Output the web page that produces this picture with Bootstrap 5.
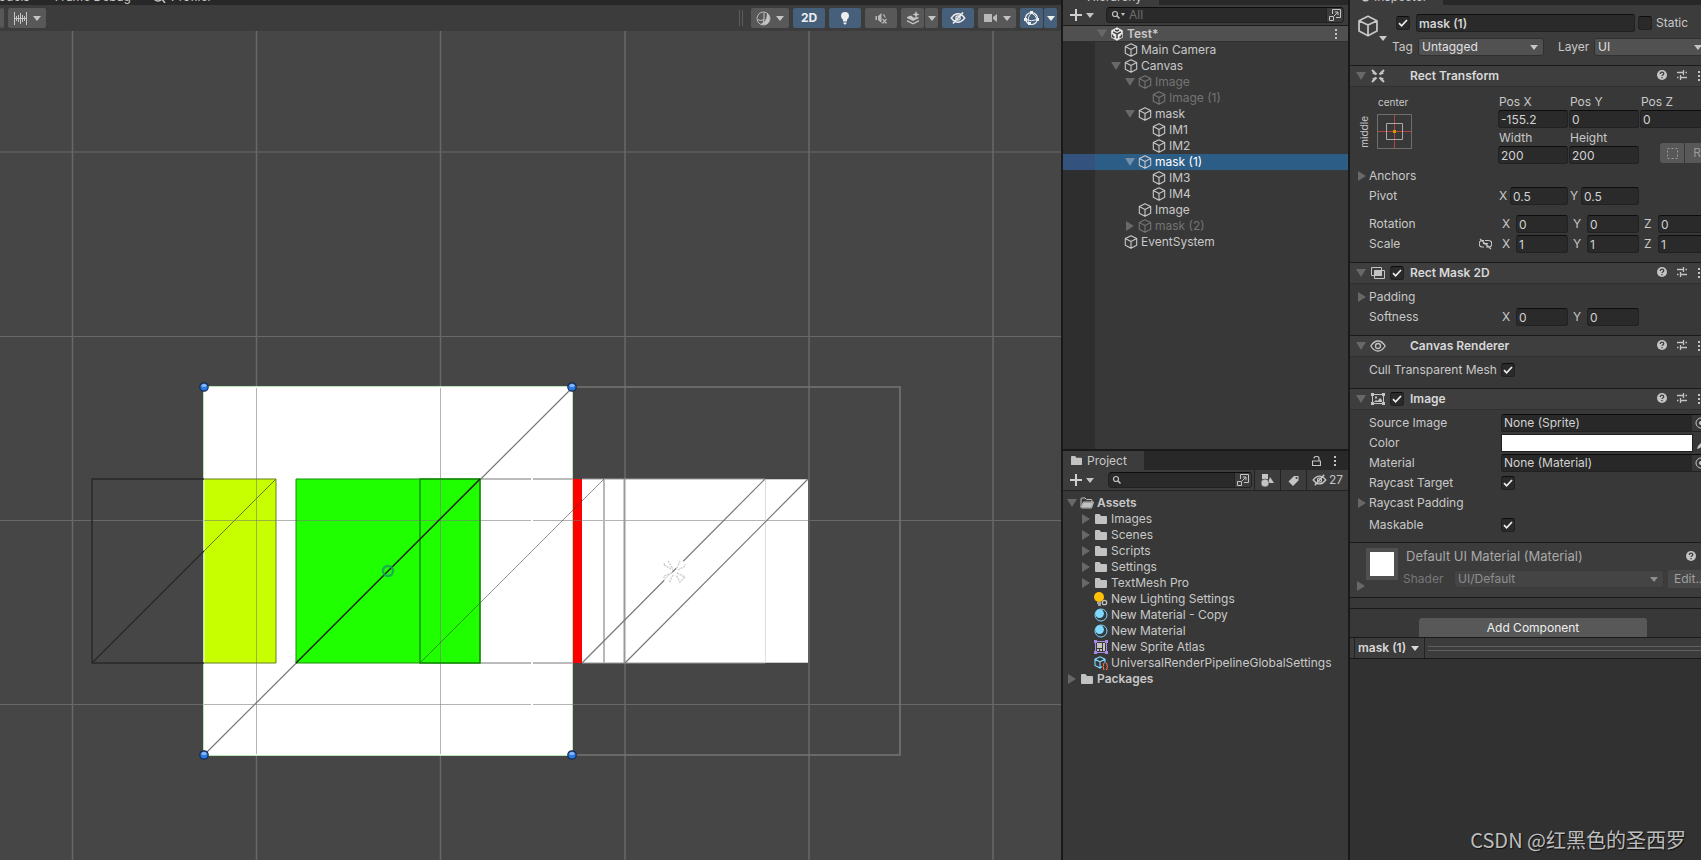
<!DOCTYPE html>
<html lang="en">
<head>
<meta charset="utf-8">
<meta name="viewport" content="width=device-width, initial-scale=1">
<title>Scene editor</title>
<link href="https://cdn.jsdelivr.net/npm/bootstrap@5.3.0/dist/css/bootstrap.min.css" rel="stylesheet">
<style>
body{background:#191919;color:#c8c8c8;font-family:Inter,"Noto Sans CJK SC",sans-serif;font-size:12px;line-height:16px}
svg{display:block;flex:none}
button{font:inherit;color:inherit}
.editor{display:grid;grid-template-columns:minmax(0,1fr) 285px 351px;column-gap:2px;height:100vh;overflow:hidden}
.pane{min-width:0;min-height:0;background:#383838;overflow:hidden}
.topstrip{height:5px;background:#282828;align-items:flex-end;overflow:hidden;flex:none}
.topstrip span{white-space:nowrap;display:flex;align-items:center;gap:4px;height:16px}
.topstrip .live{background:#3c3c3c}
.bar{background:#3c3c3c;flex:none}
.tb{background:#585858;border:0;border-radius:2px;height:20px;padding:0;display:flex;align-items:center;justify-content:center;color:#c4c4c4;flex:none}
.tb.on{background:#46607c;color:#eee}
.w38{width:38px}.w32{width:32px}.w23{width:23px}.w13{width:13px}
.caret{width:0;height:0;border:4px solid transparent;border-top:5px solid currentColor;border-bottom:0;flex:none}
.fold{width:10px;height:10px;flex:none;background:#686868;clip-path:polygon(0 10%,100% 10%,50% 90%)}
.fold.shut{clip-path:polygon(10% 0,90% 50%,10% 100%)}
.fold.none{visibility:hidden}
.scene{background:#464646;flex:1 1 0;min-height:0}
.ibtn{background:none;border:0;padding:0;display:flex;align-items:center;color:#c4c4c4}
.create{gap:4px;margin-right:12px}
.find{background:#2a2a2a;border:1px solid #212121;border-top-color:#0d0d0d;border-radius:4px;height:16px;align-items:center}
.find input{background:none;border:0;outline:0;color:#c8c8c8;padding:0;min-width:0;font-size:12px;line-height:14px}
.find input::placeholder{color:#6e6e6e;opacity:1}
.find .ibtn{border-left:1px solid #212121;background:#3c3c3c;height:14px;width:17px;justify-content:center;border-radius:0 3px 3px 0}
.tree{list-style:none;margin:0;padding:0}
.tree li{display:flex;align-items:center;height:16px;white-space:nowrap;padding-right:10px;gap:3px}
.hier{background:linear-gradient(90deg,#2e2e2e 32px,#383838 32px);flex:1 1 0;min-height:0}
.hier li{padding-left:calc(20px + var(--d)*14px)}
.hier li.sel{background:linear-gradient(90deg,#34527e 32px,#2c5d87 32px);color:#fff}
.hier li.sel svg{color:#c8c8c8}
.hier li.sel .fold{background:#7090ac}
.hier li.off{color:#747474}
.hier li.top1{background:#505050;border-bottom:1px solid #303030;font-weight:600}
.proj li{padding-left:calc(4px + var(--d)*14px)}
.chk{appearance:none;width:14px;height:14px;margin:0;background:#2a2a2a;border:1px solid #212121;border-top-color:#0d0d0d;border-radius:3px;flex:none}
.chk:checked{background:#2a2a2a url("data:image/svg+xml,%3Csvg xmlns='http://www.w3.org/2000/svg' viewBox='0 0 12 12'%3E%3Cpath d='M2 6.2l2.6 2.6L10 3' fill='none' stroke='%23eee' stroke-width='1.7'/%3E%3C/svg%3E") center/12px}
.fld{background:#2a2a2a;border:1px solid #212121;border-top-color:#0d0d0d;border-radius:3px;color:#d2d2d2;height:18px;padding:0 2px;font-size:12px;min-width:0;outline:0;flex:none}
.w70{width:70px}.w58{width:58px}.w52{width:52px}
.sel-box{appearance:none;background:#515151 url("data:image/svg+xml,%3Csvg xmlns='http://www.w3.org/2000/svg' viewBox='0 0 8 5'%3E%3Cpath d='M0 0h8L4 5z' fill='%23c4c4c4'/%3E%3C/svg%3E") no-repeat right 5px center/8px 5px;border:1px solid #303030;border-radius:3px;color:#e0e0e0;height:18px;padding:0 3px;font-size:12px;line-height:14px;flex:none}
.sel-box:disabled{background:#444 url("data:image/svg+xml,%3Csvg xmlns='http://www.w3.org/2000/svg' viewBox='0 0 8 5'%3E%3Cpath d='M0 0h8L4 5z' fill='%238e8e8e'/%3E%3C/svg%3E") no-repeat right 5px center/8px 5px;border-color:#3a3a3a;color:#8e8e8e;opacity:1}
.chead{height:22px;background:#3e3e3e;border-top:1px solid #1a1a1a;border-bottom:1px solid #303030;display:flex;align-items:center;padding:0 0 0 6px;flex:none}
.chead h2{font-size:12px;line-height:16px;font-weight:600;margin:0;color:#d8d8d8}
.chead .tail{margin-left:auto;display:flex;gap:10px;flex:none}
.cicon{margin:0 5px 0 5px}
.csec{padding:0 0 0 19px;flex:none}
.prow{display:flex;align-items:center;height:20px;white-space:nowrap}
.prow .lbl{width:132px;flex:none}
.prow>.fold{margin-left:-12px;margin-right:2px}
.ax{width:19px;padding-left:5px;flex:none}
.ax:first-child{width:15px;padding-left:1px}
.cell{width:71px;flex:none}
.cell span{padding-left:1px;display:block}
.mid{writing-mode:vertical-rl;transform:rotate(180deg);font-size:10px;line-height:12px}
.obj{background:#282828;border:1px solid #212121;border-top-color:#0d0d0d;height:18px;width:210px;flex:none;display:flex;border-radius:3px 0 0 3px}
.obj input{background:none;border:0;color:#d2d2d2;padding:0 2px;width:190px;outline:0;font-size:12px}
.obj .ibtn{background:#373737;width:18px;padding-left:3px;overflow:hidden}
.swatch{appearance:none;width:192px;height:18px;border:1px solid #212121;padding:0;background:#fff;flex:none}
.swatch::-webkit-color-swatch-wrapper{padding:0}.swatch::-webkit-color-swatch{border:0}
.line{border-top:1px solid #1a1a1a}
.grip{border-top:1px solid #606060;border-bottom:1px solid #606060;height:5px;flex:1}
.addc{width:228px;height:19px;background:#585858;border:0;border-radius:3px 3px 0 0;color:#eee;padding:0}
.thumb{width:32px;height:32px;background:#fff;border:4px solid #505050;flex:none}
.cut{overflow:hidden}
.csdn{position:absolute;right:15px;bottom:7px;font:20px/26px "Noto Sans CJK SC",sans-serif;color:#bdbdbd;text-shadow:1px 1px 1px #111}
.preview{background:#313131;flex:1 1 0;position:relative;min-height:0}
</style>
</head>
<body>
<svg width="0" height="0" class="position-absolute" aria-hidden="true">
<defs>
<symbol id="cube" viewBox="0 0 14 14"><path d="M7 .8l5.700 2.800v6.600L7 13.200 1.300 10.200V3.600zM1.300 3.600L7 6.400l5.700-2.800M7 6.400v6.800" fill="none" stroke="currentColor" stroke-width="1.100" stroke-linejoin="round"/></symbol>
<symbol id="folder" viewBox="0 0 14 12"><path d="M1 2q0-1 1-1h3.500L7 3h5q1 0 1 1v6q0 1-1 1H2q-1 0-1-1z" fill="#c2c2c2"/></symbol>
<symbol id="openf" viewBox="0 0 14 12"><path d="M1 10V2q0-1 1-1h3l1.500 1.500H11q1 0 1 1V5M1 10.500L3.500 5H13.500L11.500 11H1.500z" fill="none" stroke="#c2c2c2"/><path d="M3.500 5.500h9.500l-2 5H1.500z" fill="#c2c2c2"/></symbol>
<symbol id="plus" viewBox="0 0 12 12"><path d="M6 0v12M0 6h12" stroke="#d0d0d0" stroke-width="2"/></symbol>
<symbol id="mag" viewBox="0 0 10 10"><circle cx="4" cy="4" r="2.500" fill="none" stroke="#c4c4c4" stroke-width="1.200"/><path d="M5.800 5.800L8.500 8.500" stroke="#c4c4c4" stroke-width="1.500"/></symbol>
<symbol id="pop" viewBox="0 0 12 12"><path d="M3.500 5V.5h8v8H7M.5 7.500h4v4h-4zM5 7l4-4M5.800 3h3.200v3.200" fill="none" stroke="#c4c4c4"/></symbol>
<symbol id="dots" viewBox="0 0 4 12"><path d="M1 1h2v2H1zM1 5h2v2H1zM1 9h2v2H1z" fill="#c4c4c4"/></symbol>
<symbol id="help" viewBox="0 0 10 10"><circle cx="5" cy="5" r="5" fill="#c4c4c4"/><path d="M3.300 3.900q0-1.700 1.700-1.700t1.700 1.500q0 .9-1 1.300-.7.300-.7 1.100M5 7v1.300" fill="none" stroke="#3e3e3e" stroke-width="1.300"/></symbol>
<symbol id="tune" viewBox="0 0 10 10"><path d="M0 2.500h6M8.500 2.500H10M6.500 0v5M0 7.500h1.500M4 7.500h6M3.500 5v5" fill="none" stroke="#c4c4c4" stroke-width="1.300"/></symbol>
<symbol id="eyeoff" viewBox="0 0 16 12"><path d="M1.300 6Q4.500 1.800 8 1.800T14.700 6Q11.500 10.200 8 10.200T1.300 6z" fill="none" stroke="currentColor" stroke-width="1.400"/><circle cx="8" cy="6" r="2.200" fill="none" stroke="currentColor" stroke-width="1.200"/><path d="M3 11.500L13 .5" stroke="currentColor" stroke-width="1.600"/></symbol>
<symbol id="ball" viewBox="0 0 14 14"><circle cx="7" cy="7" r="6" fill="#333c42" stroke="#80d8ff" stroke-width="1"/><circle cx="5.600" cy="5.600" r="4.300" fill="#80d8ff"/></symbol>
<symbol id="target" viewBox="0 0 12 12"><circle cx="6" cy="6" r="5" fill="none" stroke="#c4c4c4"/><circle cx="6" cy="6" r="2" fill="#c4c4c4"/></symbol>
</defs>
</svg>

<main class="editor">
<section class="pane d-flex flex-column" aria-label="Scene">
  <div class="topstrip d-flex"><span style="margin-left:-12px">Models</span><span style="margin-left:25px">Frame Debug</span><span style="margin-left:22px"><svg width="14" height="12" viewBox="0 0 14 12"><path d="M1 8a5 5 0 1 1 8 0q-4 4-8 0zM9 8l3 4" fill="none" stroke="#c4c4c4" stroke-width="1.500"/></svg>Profiler</span></div>
  <div class="bar d-flex align-items-center" style="height:26px">
    <span class="tb" style="width:4px"></span>
    <button class="tb w38 ms-1" style="gap:6px" aria-label="Snap increment"><svg width="13" height="13" viewBox="0 0 13 13"><path d="M.5 0v13M12.500 0v13M0 6.500h13M2.500 4v5M4.500 3v7M6.500 1v11M8.500 3v7M10.500 4v5" stroke="#c4c4c4" fill="none"/></svg><i class="caret"></i></button>
    <div class="ms-auto d-flex align-items-center pe-1">
      <svg class="me-2" width="4" height="16" viewBox="0 0 4 16"><path d="M.5 0v16M3.500 0v16" stroke="#5c5c5c"/></svg>
      <button class="tb w38 me-1" style="gap:5px" aria-label="Shading"><svg width="15" height="15" viewBox="0 0 15 15"><circle cx="7.500" cy="7.500" r="6.500" fill="none" stroke="#b8b8b8"/><path d="M11 2.200Q15 5 13 10T5 13.500Q11 10 11 2.200z" fill="#c4c4c4"/><path d="M1.500 8.500Q5 10.500 8 8.500V1.500M8 8.500Q8 12 5 13.500" fill="none" stroke="#c4c4c4"/></svg><i class="caret"></i></button>
      <button class="tb on w32 me-1 fw-bold">2D</button>
      <button class="tb on w32 me-1" aria-label="Lighting"><svg width="10" height="13" viewBox="0 0 10 13"><path d="M5 0a4 4 0 0 1 4 4q0 2-2 3.700V9.500H3V7.700Q1 6 1 4a4 4 0 0 1 4-4zM3.500 10.500h3v1l-1 1h-1l-1-1z" fill="#eee"/></svg></button>
      <button class="tb w32 me-1" aria-label="Audio"><svg width="14" height="12" viewBox="0 0 14 12"><path d="M1.500 4H3v4H1.500zM4 4l3.500-3v10L4 8z" fill="#b8b8b8"/><path d="M9 2.500q2 1 2 3M8.500 7l4 4.500M12.500 7l-4 4.500" fill="none" stroke="#b8b8b8" stroke-width="1.200"/></svg></button>
      <button class="tb w23" aria-label="Effects"><svg width="14" height="14" viewBox="0 0 14 14"><path d="M1 6l4-1.500 3 2.300L12 6l1 1-6 3-6-3zM1 9l6 3 6-3v1.500l-6 3-6-3zM10 0l1 2.500L13.500 3.500 11 4.500l-1 2.500-1-2.500L6.500 3.500 9 2.500z" fill="#c4c4c4"/></svg></button>
      <button class="tb w13 me-1" style="margin-left:1px" aria-label="Effects menu"><i class="caret"></i></button>
      <button class="tb on w32 me-1" aria-label="Hidden objects"><svg width="16" height="12"><use href="#eyeoff"/></svg></button>
      <button class="tb w38 me-1" style="gap:6px" aria-label="Camera"><svg width="13" height="10" viewBox="0 0 13 10"><path d="M0 1h8v8H0zM9 4l4-3v8L9 6z" fill="#b8b8b8"/></svg><i class="caret"></i></button>
      <button class="tb on w23" aria-label="Gizmos"><svg width="15" height="15" viewBox="0 0 15 15"><circle cx="7.500" cy="7.500" r="6" fill="none" stroke="#eee" stroke-width="1.200"/><path d="M7.500 2Q3 6 4.500 12.500M7.500 2Q12 4 13 8.500M1.500 8.500Q7 11 13.500 8.500" fill="none" stroke="#eee"/><path d="M6 0h3v3H6zM0 7h3v3H0zM12 7h3v3h-3zM4 11h3v3H4z" fill="#eee"/></svg></button>
      <button class="tb on w13" style="margin-left:1px" aria-label="Gizmos menu"><i class="caret"></i></button>
    </div>
  </div>
  <!-- Scene canvas: units are editor pixels -->
  <svg class="scene w-100" viewBox="0 31 1061 829" preserveAspectRatio="xMinYMin slice" role="img" aria-label="2D scene view">
    <g fill="none" stroke="#686868" stroke-width="1.500"><path d="M72.500 31v829M256.500 31v829M440.500 31v829M625 31v829M809 31v829M993 31v829"/><path stroke-width="1" d="M0 152h1061M0 336.500h1061M0 520.500h1061M0 704.500h1061"/></g>
    <rect x="203.500" y="386.500" width="369" height="369" fill="#fff" stroke="#b9e6b4"/>
    <path d="M573 387h327v368H573" fill="none" stroke="#747474" stroke-width="1.600"/>
    <rect x="582" y="479" width="226" height="184" fill="#fff"/>
    <path fill="#c8ff00" d="M204.500 479H276v184h-71.500z"/>
    <path fill="#20ff00" d="M296 479h184v184H296z"/>
    <path fill="#f00" d="M573 479h9v184h-9z"/>
    <path d="M204 479H92v184h112M92 663l112-112" fill="none" stroke="#292929" stroke-width="1.400"/>
    <path d="M204 551l72-72v184h-72M204 479h72" fill="none" stroke="#647f23"/>
    <path d="M480 479h93M480 663h93" stroke="#bbb" stroke-width="2"/>
    <path d="M582 479h226M582 663h226" stroke="#999"/>
    <path d="M765 478.500h43M765 663.500h43" stroke="#444"/>
    <g stroke="#777" stroke-opacity=".55"><path d="M256.500 388v366M440.500 388v366M204 520.500h604M204 704.500h369"/></g>
    <path d="M604 479v184" stroke="#b8b8b8" stroke-width="2"/><path d="M624.500 479v184" stroke="#999" stroke-width="2"/><path d="M765.500 479v184" stroke="#ddd"/>
    <path d="M204 755l369-368M582 663l183-184M625 663l183-184" stroke="#777" stroke-width="1.200"/>
    <path d="M420 663l184-184" stroke="#333" stroke-opacity=".65" stroke-width=".8"/>
    <path d="M296 479h184v184H296z" fill="none" stroke="#168c0b"/>
    <path d="M420 663V479h60v184z" fill="none" stroke="#168c0b" stroke-width="1.400"/>
    <path d="M296 663l184-184" stroke="#062f04" stroke-width="1.300"/>
    <path d="M531 520.500h2M531 479h2M531 663h2M531 704.500h2" stroke="#fff" stroke-width="2"/>
    <circle cx="388" cy="571" r="5" fill="none" stroke="#189b66" stroke-opacity=".8" stroke-width="2.400"/>
    <path d="M665 562l8 8M684 562l-7 7M666 582l8-8M685 582l-8-8" stroke="#fff" stroke-width="6"/>
    <path d="M664 565l9 5M664 565l1-3M668 561l5 8M677 568l3-7M678 570l7-4v-2M672 573l-8 3v2M673 575l-4 8M677 573l8 4-5 5-4-7" fill="none" stroke="#ccc" stroke-width="1.400" stroke-dasharray="2 1"/>
    <g fill="#297be8" stroke="#142b4b" stroke-width="1.200"><circle cx="204" cy="387" r="4.200"/><circle cx="572" cy="387" r="4.200"/><circle cx="204" cy="755" r="4.200"/><circle cx="572" cy="755" r="4.200"/></g>
    <g fill="#90b9ef"><ellipse cx="204" cy="385.500" rx="2.600" ry="1.600"/><ellipse cx="572" cy="385.500" rx="2.600" ry="1.600"/><ellipse cx="204" cy="753.500" rx="2.600" ry="1.600"/><ellipse cx="572" cy="753.500" rx="2.600" ry="1.600"/></g>
  </svg>
</section>

<div class="d-flex flex-column" style="min-height:0">
  <section class="pane d-flex flex-column" style="flex:449 1 0" aria-label="Hierarchy">
    <div class="topstrip d-flex"><span class="live" style="width:96px;padding-left:24px">Hierarchy</span></div>
    <div class="bar d-flex align-items-center" style="height:20px;padding:0 4px 0 7px">
      <button class="ibtn create" aria-label="Create"><svg width="12" height="12"><use href="#plus"/></svg><i class="caret"></i></button>
      <label class="find d-flex flex-fill ps-1" style="min-width:0"><svg width="10" height="10"><use href="#mag"/></svg><svg class="me-1" width="4" height="4" viewBox="0 0 4 4"><path d="M0 0h4L2 3z" fill="#c4c4c4"/></svg><input class="flex-fill" placeholder="All" aria-label="Search hierarchy"><button class="ibtn" aria-label="Open search"><svg width="12" height="12"><use href="#pop"/></svg></button></label>
    </div>
    <div class="hier">
    <ul class="tree line" id="hierList"></ul>
    </div>
  </section>
  <section class="pane d-flex flex-column" style="flex:409 1 0;margin-top:2px" aria-label="Project">
    <div class="d-flex align-items-center" style="height:19px;background:#282828;flex:none;padding-right:11px"><span class="d-flex align-items-center gap-1" style="background:#3c3c3c;width:81px;height:19px;padding-left:7px"><svg width="13" height="11"><use href="#folder"/></svg>Project</span>
      <button class="ibtn ms-auto me-2 pe-1" aria-label="Lock"><svg width="9" height="10" viewBox="0 0 9 10"><path d="M.5 5h8v4.500h-8zM2 2.500Q2 .5 4.500.5T7 2.500V5" fill="none" stroke="#c4c4c4" stroke-width="1.200"/></svg></button><button class="ibtn" aria-label="Menu"><svg width="4" height="12"><use href="#dots"/></svg></button></div>
    <div class="bar d-flex align-items-center" style="height:21px;padding:0 5px 0 7px;border-bottom:1px solid #232323">
      <button class="ibtn create" aria-label="Add asset"><svg width="12" height="12"><use href="#plus"/></svg><i class="caret"></i></button>
      <label class="find d-flex flex-fill" style="min-width:0;margin:0 2px;padding-left:3px"><svg width="10" height="10"><use href="#mag"/></svg><input class="flex-fill" style="width:0" aria-label="Search project"><button class="ibtn" aria-label="Open search"><svg width="12" height="12"><use href="#pop"/></svg></button></label>
      <button class="ibtn justify-content-center" style="width:26px;border-left:1px solid #232323;height:20px" aria-label="Filter by type"><svg width="13" height="13" viewBox="0 0 13 13"><path d="M1 0h6v5H1zM9 3l4 6H7z" fill="#c4c4c4"/><circle cx="4" cy="9" r="4" fill="#c4c4c4" stroke="#3c3c3c" stroke-width=".6"/></svg></button>
      <button class="ibtn justify-content-center" style="width:26px;border-left:1px solid #232323;height:20px" aria-label="Filter by label"><svg width="11" height="11" viewBox="0 0 11 11"><path d="M6 1h4.500v4.500L5 11 .5 6.500z" fill="#c4c4c4"/><circle cx="8.500" cy="3" r="1" fill="#3c3c3c"/></svg></button>
      <button class="ibtn" style="padding-left:5px;gap:2px;border-left:1px solid #232323;height:20px"><svg width="15" height="12"><use href="#eyeoff"/></svg>27</button>
    </div>
    <ul class="tree proj" id="projList" style="padding-top:4px"></ul>
  </section>
</div>

<section class="pane d-flex flex-column" aria-label="Inspector">
  <div class="topstrip d-flex"><span class="live" style="width:93px;padding-left:11px"><svg width="9" height="9" viewBox="0 0 9 9"><circle cx="4.500" cy="4.500" r="4" fill="#c4c4c4"/></svg>Inspector</span></div>
  <div class="bar d-flex" style="height:60px;padding:9px 0 0 7px">
    <div class="d-flex align-items-end" style="width:32px;height:27px;flex:none"><svg width="22" height="22" viewBox="0 0 14 14" class="mb-1"><use href="#cube"/></svg><i class="caret"></i></div>
    <div class="flex-fill cut">
      <div class="d-flex align-items-center" style="padding-left:7px"><input type="checkbox" class="chk" checked aria-label="Active"><input class="fld fw-semibold" style="width:219px;margin:0 3px 0 6px" value="mask (1)" aria-label="Name"><input id="stat" type="checkbox" class="chk me-1"><label for="stat">Static</label></div>
      <div class="d-flex align-items-center" style="margin-top:6px;padding-left:3px"><label for="tag" style="width:26px;flex:none">Tag</label><select id="tag" class="sel-box" style="width:126px"><option>Untagged</option></select><label for="layer" style="margin-left:14px;width:36px;flex:none">Layer</label><select id="layer" class="sel-box" style="width:114px"><option>UI</option></select></div>
    </div>
  </div>

  <div class="chead"><i class="fold"></i><svg style="margin-left:2px" width="20" height="16" viewBox="0 0 20 16"><path d="M8.500 6.500L4 2M8.500 9.500L4 14M11.500 6.500L16 2M11.500 9.500L16 14" stroke="#c4c4c4" stroke-width="2"/><path d="M4 5.500l4 1.500-1.500-4zM4 10.500l4-1.500-1.500 4zM16 5.500l-4 1.500 1.500-4zM16 10.500l-4-1.500 1.500 4z" fill="#c4c4c4"/></svg><h2 style="margin-left:22px">Rect Transform</h2><div class="tail" data-tail></div></div>
  <div class="csec" style="padding-top:5px;height:175px">
    <div class="d-flex" style="height:74px">
      <div style="width:131px;padding-top:2px;margin-left:-11px;margin-right:9px;flex:none"><div style="padding-left:20px;font-size:10px;line-height:16px">center</div><div class="d-flex align-items-center" style="gap:7px;margin-top:4px"><span class="mid">middle</span><svg width="35" height="35" viewBox="0 0 35 35"><path d="M17.500 1v33M1 17.500h33" stroke="#b44444"/><path d="M.5.5h34v34H.5z" fill="none" stroke="#6e6e6e"/><path d="M9.500 9.500h16v16h-16z" fill="none" stroke="#aaa"/><path d="M16 16h3v3h-3z" fill="#d69a00"/></svg></div></div>
      <div style="flex:none" data-size></div>
    </div>
    <div class="prow"><i class="fold shut"></i>Anchors</div>
    <div class="prow"><span style="width:130px">Pivot</span><span style="width:11px">X</span><input class="fld w58" value="0.5" aria-label="Pivot X"><span style="width:13px;padding-left:2px">Y</span><input class="fld w58" value="0.5" aria-label="Pivot Y"></div>
    <div class="prow" style="margin-top:8px"><span class="lbl">Rotation</span><span data-xyz="0"></span></div>
    <div class="prow"><span class="lbl d-flex align-items-center justify-content-between" style="padding-right:9px">Scale<svg width="13" height="12" viewBox="0 0 13 12"><path d="M5 2.500H3.500a3 3 0 0 0 0 6.500H5M6 2.500h3.500a3 3 0 0 1 0 6.500H7M4 5.700h5M1 1l11 10" fill="none" stroke="#c4c4c4" stroke-width="1.200"/></svg></span><span data-xyz="1"></span></div>
  </div>

  <div class="chead"><i class="fold"></i><svg class="cicon" width="14" height="12" viewBox="0 0 14 12"><path d="M.5.5h10v8H.5zM3.500 3.500h10v8h-10z" fill="none" stroke="#c4c4c4"/><path d="M4 3h7v6H4z" fill="#c4c4c4"/></svg><input type="checkbox" class="chk" checked aria-label="Rect Mask 2D enabled"><h2 style="margin-left:6px">Rect Mask 2D</h2><div class="tail" data-tail></div></div>
  <div class="csec" style="padding-top:3px;height:51px"><div class="prow"><i class="fold shut"></i>Padding</div><div class="prow"><span class="lbl">Softness</span><span data-xy></span></div></div>

  <div class="chead"><i class="fold"></i><svg class="ms-1" width="16" height="12" viewBox="0 0 16 12"><path d="M.8 6Q4 1 8 1t7.200 5Q12 11 8 11T.8 6z" fill="none" stroke="#c4c4c4" stroke-width="1.300"/><circle cx="8" cy="6" r="2.500" fill="none" stroke="#c4c4c4" stroke-width="1.300"/></svg><h2 style="margin-left:24px">Canvas Renderer</h2><div class="tail" data-tail></div></div>
  <div class="csec" style="padding-top:3px;height:31px"><div class="prow"><label class="lbl" for="cull">Cull Transparent Mesh</label><input id="cull" type="checkbox" class="chk" checked></div></div>

  <div class="chead"><i class="fold"></i><svg class="cicon" width="14" height="12" viewBox="0 0 14 12"><path d="M1.500 1.500h11v9h-11z" fill="none" stroke="#c4c4c4"/><path d="M0 0h3v3H0zM11 0h3v3h-3zM0 9h3v3H0zM11 9h3v3h-3zM3 9l2-2 1.500 1L9 5l2 2v2zM4 3.500h2v2H4z" fill="#c4c4c4"/></svg><input type="checkbox" class="chk" checked aria-label="Image enabled"><h2 style="margin-left:6px">Image</h2><div class="tail" data-tail></div></div>
  <div class="csec" style="padding-top:3px;height:132px">
    <div class="prow"><label class="lbl" for="src">Source Image</label><div class="obj"><input id="src" value="None (Sprite)"><button class="ibtn" aria-label="Pick sprite"><svg width="12" height="12"><use href="#target"/></svg></button></div></div>
    <div class="prow"><label class="lbl" for="col">Color</label><input type="color" id="col" class="swatch" value="#ffffff"><svg class="ms-1" width="12" height="12" viewBox="0 0 12 12"><path d="M0 12l1-3 5-5 2 2-5 5z" fill="#c4c4c4"/></svg></div>
    <div class="prow"><label class="lbl" for="mat">Material</label><div class="obj"><input id="mat" value="None (Material)"><button class="ibtn" aria-label="Pick material"><svg width="12" height="12"><use href="#target"/></svg></button></div></div>
    <div class="prow"><label class="lbl" for="ray">Raycast Target</label><input id="ray" type="checkbox" class="chk" checked></div>
    <div class="prow"><i class="fold shut"></i>Raycast Padding</div>
    <div class="prow" style="margin-top:2px"><label class="lbl" for="mk">Maskable</label><input id="mk" type="checkbox" class="chk" checked></div>
  </div>

  <div class="bar line d-flex" style="height:55px;padding:5px 0 0 6px;color:#a8a8a8">
    <i class="fold shut align-self-end" style="margin-bottom:6px"></i><div class="thumb"></div>
    <div class="flex-fill cut" style="margin-left:5px">
      <div class="d-flex align-items-center" style="font-size:13px;padding-left:3px">Default UI Material (Material)<svg class="ms-auto" style="margin-right:5px" width="10" height="10"><use href="#help"/></svg></div>
      <div class="d-flex align-items-center" style="margin-top:6px"><label for="shader" style="color:#777;width:51px;flex:none">Shader</label><select id="shader" class="sel-box" style="width:210px" disabled><option>UI/Default</option></select><button class="tb" style="background:#484848;color:#a0a0a0;width:48px;height:18px;margin-left:4px;justify-content:flex-start;padding-left:6px">Edit...</button></div>
    </div>
  </div>
  <div class="line" style="height:11px;flex:none"></div>
  <div class="line d-flex" style="height:29px;padding:9px 0 0 69px;flex:none"><button class="addc">Add Component</button></div>
  <div class="bar line d-flex align-items-center" style="height:21px;padding-left:4px"><button class="ibtn fw-semibold" style="border-left:1px solid #232323;border-right:1px solid #232323;height:20px;width:71px;gap:5px;padding-left:3px;color:#d8d8d8">mask (1)<i class="caret"></i></button><div class="grip" style="margin-left:3px"></div></div>
  <div class="preview line"><div class="csdn">CSDN @红黑色的圣西罗</div></div>
</section>
</main>

<script src="https://cdn.jsdelivr.net/npm/bootstrap@5.3.0/dist/js/bootstrap.bundle.min.js"></script>
<script>
const cube='<svg width="14" height="14"><use href="#cube"/></svg>';
const unity='<svg width="14" height="14" viewBox="0 0 14 14"><path d="M7 .3l5.800 3.300v6.800L7 13.700 1.200 10.400V3.600z" fill="#eee"/><path d="M7 7v4.500M7 7L3 4.800M7 7l4-2.200M5 3l2 1 2-1M2.500 7.500v2l2 1M11.500 7.500v2l-2 1" fill="none" stroke="#444" stroke-width="1.500"/></svg>';
const tree=[[0,'o','Test*','top1'],[1,'','Main Camera'],[1,'o','Canvas'],[2,'o','Image','off'],[3,'','Image (1)','off'],[2,'o','mask'],[3,'','IM1'],[3,'','IM2'],[2,'o','mask (1)','sel'],[3,'','IM3'],[3,'','IM4'],[2,'','Image'],[2,'c','mask (2)','off'],[1,'','EventSystem']];
const fold=s=>`<i class="fold ${s==='c'?'shut':s?'':'none'}"></i>`;
document.getElementById('hierList').innerHTML=tree.map(([d,s,t,c])=>`<li class="${c||''}" style="--d:${d+1}">${fold(s)}${d?cube:unity}<span>${t}</span>${d?'':'<svg class="ms-auto" width="4" height="12"><use href="#dots"/></svg>'}</li>`).join('');
const use=(n,h)=>`<svg width="14" height="${h}"><use href="#${n}"/></svg>`;
const light='<svg width="14" height="14" viewBox="0 0 14 14"><circle cx="5" cy="5" r="5" fill="#ffc107"/><path d="M3 11h4M4 13h3" stroke="#c4c4c4" stroke-width="1.500"/><circle cx="10.500" cy="10.500" r="2.200" fill="#383838" stroke="#c4c4c4" stroke-width="1.300"/></svg>';
const atlas='<svg width="14" height="14" viewBox="0 0 14 14"><path d="M1.500 1.500h11v11h-11z" fill="none" stroke="#a78be8"/><path d="M0 0h3v3H0zM11 0h3v3h-3zM0 11h3v3H0zM11 11h3v3h-3z" fill="#a78be8"/><path d="M3 3h5v5H3zM9 3h2v8H9zM3 9h2v2H3zM6 9h2v2H6z" fill="#c4c4c4"/></svg>';
const urp='<svg width="14" height="14" viewBox="0 0 14 14"><path d="M6 .8l5 2.400v5.500L6 12 1 9.500V3.200zM1 3.200l5 2.600 5-2.600M6 5.800V12" fill="none" stroke="#80d8ff" stroke-width="1.100"/><path d="M8 7h6v7H8z" fill="#383838"/><path d="M10.500 7.500h-1V10l-.8.500.8.500v2.500h1M12 7.500h1V10l.8.500-.8.500v2.500h-1" fill="none" stroke="#ff6e40"/></svg>';
const assets=[[0,'o','<b class="fw-semibold">Assets</b>',use('openf',12)],...['Images','Scenes','Scripts','Settings','TextMesh Pro'].map(t=>[1,'c',t,use('folder',12)]),[1,'','New Lighting Settings',light],[1,'','New Material - Copy',use('ball',14)],[1,'','New Material',use('ball',14)],[1,'','New Sprite Atlas',atlas],[1,'','UniversalRenderPipelineGlobalSettings',urp],[0,'c','<b class="fw-semibold">Packages</b>',use('folder',12)]];
document.getElementById('projList').innerHTML=assets.map(([d,s,t,i])=>`<li style="--d:${d}">${fold(s)}${i}<span>${t}</span></li>`).join('');
document.querySelectorAll('[data-tail]').forEach(e=>e.innerHTML='<svg width="10" height="10"><use href="#help"/></svg><svg width="10" height="10"><use href="#tune"/></svg><svg width="4" height="12"><use href="#dots"/></svg>');
const axes=(list,v)=>list.map(a=>`<span class="ax">${a}</span><input class="fld w52" value="${v}" aria-label="${a}">`).join('');
document.querySelectorAll('[data-xyz]').forEach(e=>{e.className='d-flex align-items-center';e.innerHTML=axes(['X','Y','Z'],e.dataset.xyz)});
document.querySelectorAll('[data-xy]').forEach(e=>{e.className='d-flex align-items-center';e.innerHTML=axes(['X','Y'],'0')});
const cell=(l,v)=>`<label class="cell d-block"><span>${l}</span><input class="fld w70 d-block" value="${v}"></label>`;
document.querySelector('[data-size]').innerHTML=`<div class="d-flex" style="height:36px;padding-top:2px">${cell('Pos X','-155.2')}${cell('Pos Y','0')}${cell('Pos Z','0')}</div><div class="d-flex" style="height:36px;padding-top:2px">${cell('Width','200')}${cell('Height','200')}<div class="d-flex align-items-center" style="margin:12px 0 0 20px"><button class="tb" style="width:24px;border-radius:3px 0 0 3px" aria-label="Blueprint mode"><svg width="11" height="11" viewBox="0 0 11 11"><path d="M.5.5h10v10H.5z" fill="none" stroke="#999" stroke-dasharray="2 2"/></svg></button><button class="tb" style="width:24px;margin-left:1px;color:#999;border-radius:0 3px 3px 0">R</button></div></div>`;
</script>
</body>
</html>
